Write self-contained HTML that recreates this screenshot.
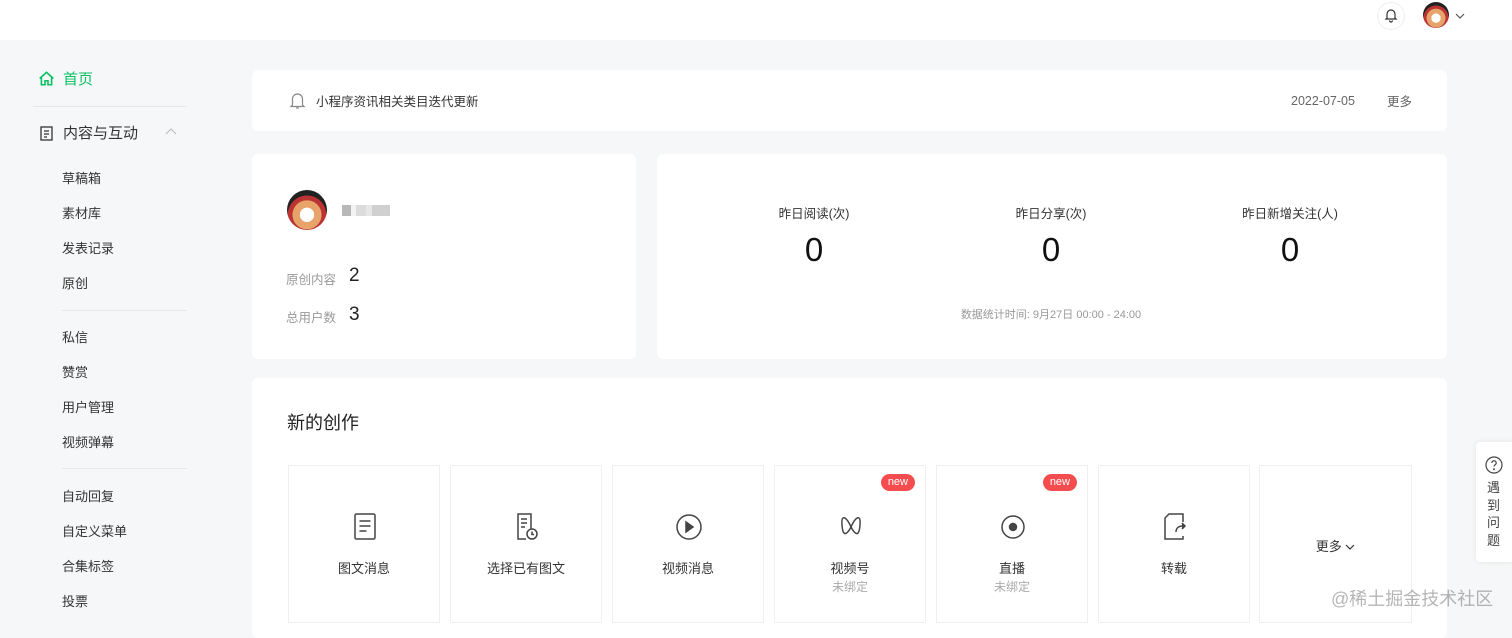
<!DOCTYPE html>
<html><head><meta charset="utf-8"><style>
*{margin:0;padding:0;box-sizing:border-box}
body{width:1512px;height:627px;overflow:hidden;background:#f6f7f8;font-family:"Liberation Sans","Noto Sans CJK SC",sans-serif;color:#333;position:relative}
.a{position:absolute}
.card{position:absolute;background:#fff;border-radius:6px}
.nav{position:absolute;left:62px;font-size:13px;color:#333}
.div{position:absolute;height:1px;background:#e7e7e7}
.it{position:absolute;top:465px;width:152px;height:158px;border:1px solid #f0f0f0;background:#fff;text-align:center}
.it .ic{position:absolute;left:0;right:0;top:46px;height:28px}
.it .t{position:absolute;left:0;right:0;top:92px;font-size:13px;color:#333}
.it .s{position:absolute;left:0;right:0;top:112px;font-size:12px;color:#aaa}
.new{position:absolute;right:10px;top:8px;background:#f54d4f;color:#fff;font-size:11px;border-radius:9px;padding:1px 7px;line-height:15px}
.av{border-radius:50%;background:radial-gradient(circle at 50% 62%,#fff 0 22%,#e8a36a 23% 45%,#b33 46% 60%,#222 61%)}
</style></head><body>
<div class="a" style="left:0;top:0;width:1512px;height:40px;background:#fff"></div>
<div class="a" style="left:1377px;top:2px;width:28px;height:28px;border:1px solid #eee;border-radius:50%"></div>
<svg class="a" style="left:1383px;top:7px" width="16" height="16" viewBox="0 0 16 16" fill="none" stroke="#333" stroke-width="1.2"><path d="M4 11V7a4 4 0 018 0v4l1 1H3z"/><path d="M6.5 13.5a1.5 1.5 0 003 0"/></svg>
<div class="a av" style="left:1423px;top:2px;width:26px;height:26px"></div>
<svg class="a" style="left:1455px;top:12px" width="10" height="8" viewBox="0 0 10 8" fill="none" stroke="#555" stroke-width="1.2"><path d="M1 2l4 4 4-4"/></svg>

<svg class="a" style="left:38px;top:70px" width="17" height="17" viewBox="0 0 15 15" fill="none" stroke="#07c160" stroke-width="1.4"><path d="M1.5 7.5L7.5 2l6 5.5M3 6.2V13h3.2V9.5h2.6V13H12V6.2"/></svg>
<div class="a" style="left:63px;top:68px;font-size:15px;color:#07c160">首页</div>
<div class="div" style="left:33px;top:106px;width:154px"></div>
<svg class="a" style="left:40px;top:126px" width="13" height="15" viewBox="0 0 13 15" fill="none" stroke="#333" stroke-width="1.3"><rect x="1" y="1" width="11" height="13"/><path d="M4 5h5M4 8h5M4 11h3"/></svg>
<div class="a" style="left:63px;top:122px;font-size:15px;color:#333">内容与互动</div>
<svg class="a" style="left:165px;top:128px" width="12" height="8" viewBox="0 0 12 8" fill="none" stroke="#bbb" stroke-width="1"><path d="M1 6l5-5 5 5"/></svg>
<div class="nav" style="top:168px">草稿箱</div>
<div class="nav" style="top:203px">素材库</div>
<div class="nav" style="top:238px">发表记录</div>
<div class="nav" style="top:273px">原创</div>
<div class="div" style="left:62px;top:310px;width:125px"></div>
<div class="nav" style="top:327px">私信</div>
<div class="nav" style="top:362px">赞赏</div>
<div class="nav" style="top:397px">用户管理</div>
<div class="nav" style="top:432px">视频弹幕</div>
<div class="div" style="left:62px;top:468px;width:125px"></div>
<div class="nav" style="top:486px">自动回复</div>
<div class="nav" style="top:521px">自定义菜单</div>
<div class="nav" style="top:556px">合集标签</div>
<div class="nav" style="top:591px">投票</div>

<div class="card" style="left:252px;top:70px;width:1195px;height:61px"></div>
<svg class="a" style="left:289px;top:91px" width="17" height="19" viewBox="0 0 17 19" fill="none" stroke="#888" stroke-width="1.2"><path d="M3.5 14V8a5 5 0 0110 0v6l1.5 1.5h-13z"/><path d="M7 17h3"/></svg>
<div class="a" style="left:316px;top:91px;font-size:12.5px;color:#333">小程序资讯相关类目迭代更新</div>
<div class="a" style="left:1291px;top:94px;font-size:12.5px;color:#666">2022-07-05</div>
<div class="a" style="left:1387px;top:91px;font-size:12.5px;color:#666">更多</div>

<div class="card" style="left:252px;top:154px;width:384px;height:205px"></div>
<div class="a av" style="left:287px;top:190px;width:40px;height:40px"></div>
<div class="a" style="left:342px;top:205px;width:48px;height:11px;background:linear-gradient(90deg,#999 0 9px,#eee 9px 14px,#ccc 14px 24px,#ddd 24px 30px,#bbb 30px 48px);opacity:.7"></div>
<div class="a" style="left:286px;top:269px;font-size:12.5px;color:#999">原创内容</div>
<div class="a" style="left:349px;top:265px;font-size:19px;color:#222">2</div>
<div class="a" style="left:286px;top:307px;font-size:12.5px;color:#999">总用户数</div>
<div class="a" style="left:349px;top:304px;font-size:19px;color:#222">3</div>

<div class="card" style="left:657px;top:154px;width:790px;height:205px"></div>
<div class="a" style="left:714px;top:203px;width:200px;text-align:center;font-size:12.5px">昨日阅读(次)</div>
<div class="a" style="left:714px;top:231px;width:200px;text-align:center;font-size:33px;color:#111">0</div>
<div class="a" style="left:951px;top:203px;width:200px;text-align:center;font-size:12.5px">昨日分享(次)</div>
<div class="a" style="left:951px;top:231px;width:200px;text-align:center;font-size:33px;color:#111">0</div>
<div class="a" style="left:1190px;top:203px;width:200px;text-align:center;font-size:12.5px">昨日新增关注(人)</div>
<div class="a" style="left:1190px;top:231px;width:200px;text-align:center;font-size:33px;color:#111">0</div>
<div class="a" style="left:900px;top:306px;width:302px;text-align:center;font-size:11px;color:#999">数据统计时间: 9月27日 00:00 - 24:00</div>

<div class="card" style="left:252px;top:378px;width:1195px;height:260px"></div>
<div class="a" style="left:287px;top:409px;font-size:18px;color:#222">新的创作</div>

<div class="it" style="left:288px"><svg class="ic" viewBox="0 0 152 28" fill="none" stroke="#444" stroke-width="1.5"><rect x="66" y="2" width="20" height="25" rx="1.5"/><path d="M70.5 9h11M70.5 14h11M70.5 19h7"/></svg><div class="t">图文消息</div></div>
<div class="it" style="left:450px"><svg class="ic" viewBox="0 0 152 28" fill="none" stroke="#444" stroke-width="1.5"><path d="M80 17V2H67v25h8"/><path d="M70 7h6M70 11h6M70 15h4"/><circle cx="81" cy="22" r="5"/><path d="M81 19.5v3h2"/></svg><div class="t">选择已有图文</div></div>
<div class="it" style="left:612px"><svg class="ic" viewBox="0 0 152 28" fill="none" stroke="#444" stroke-width="1.5"><circle cx="76" cy="15" r="12"/><path d="M73 10v10l7-5z" fill="#444"/></svg><div class="t">视频消息</div></div>
<div class="it" style="left:774px"><span class="new">new</span><svg class="ic" viewBox="0 0 152 28" fill="none" stroke="#444" stroke-width="1.5"><path d="M76 15c-3-7-6-10-8-9-2 1-1 13 1 15 2 2 5-2 7-6 2 4 5 8 7 6 2-2 3-14 1-15-2-1-5 2-8 9z"/></svg><div class="t">视频号</div><div class="s">未绑定</div></div>
<div class="it" style="left:936px"><span class="new">new</span><svg class="ic" viewBox="0 0 152 28" fill="none" stroke="#444" stroke-width="1.5"><circle cx="76" cy="15" r="11"/><circle cx="76" cy="15" r="3.5" fill="#444"/></svg><div class="t">直播</div><div class="s">未绑定</div></div>
<div class="it" style="left:1098px"><svg class="ic" viewBox="0 0 152 28" fill="none" stroke="#444" stroke-width="1.5"><path d="M84 10V2H70l-4 4v21h18v-3"/><path d="M77 20c0-4 3-6 7-6" /><path d="M83 11l3 3-3 3" fill="#444"/></svg><div class="t">转载</div></div>
<div class="it" style="left:1259px;width:153px"><div class="a" style="left:0;right:0;top:70px;font-size:13px">更多 <svg width="10" height="8" viewBox="0 0 10 8" fill="none" stroke="#333" stroke-width="1.2"><path d="M1 2l4 4 4-4"/></svg></div></div>

<div class="a" style="left:1476px;top:442px;width:40px;height:120px;background:#fff;border-radius:4px;box-shadow:0 0 6px rgba(0,0,0,.08)"></div>
<svg class="a" style="left:1485px;top:456px" width="18" height="18" viewBox="0 0 18 18" fill="none" stroke="#444" stroke-width="1.2"><circle cx="9" cy="9" r="8"/><path d="M6.8 7a2.2 2.2 0 114 1.2c-.8.6-1.8 1-1.8 2.3"/><circle cx="9" cy="13.3" r=".4" fill="#444"/></svg>
<div class="a" style="left:1487px;top:479px;width:14px;font-size:13px;line-height:17.5px;color:#444">遇到问题</div>
<div class="a" style="left:1331px;top:585px;font-size:18px;color:rgba(120,120,120,.55)">@稀土掘金技术社区</div>
</body></html>
